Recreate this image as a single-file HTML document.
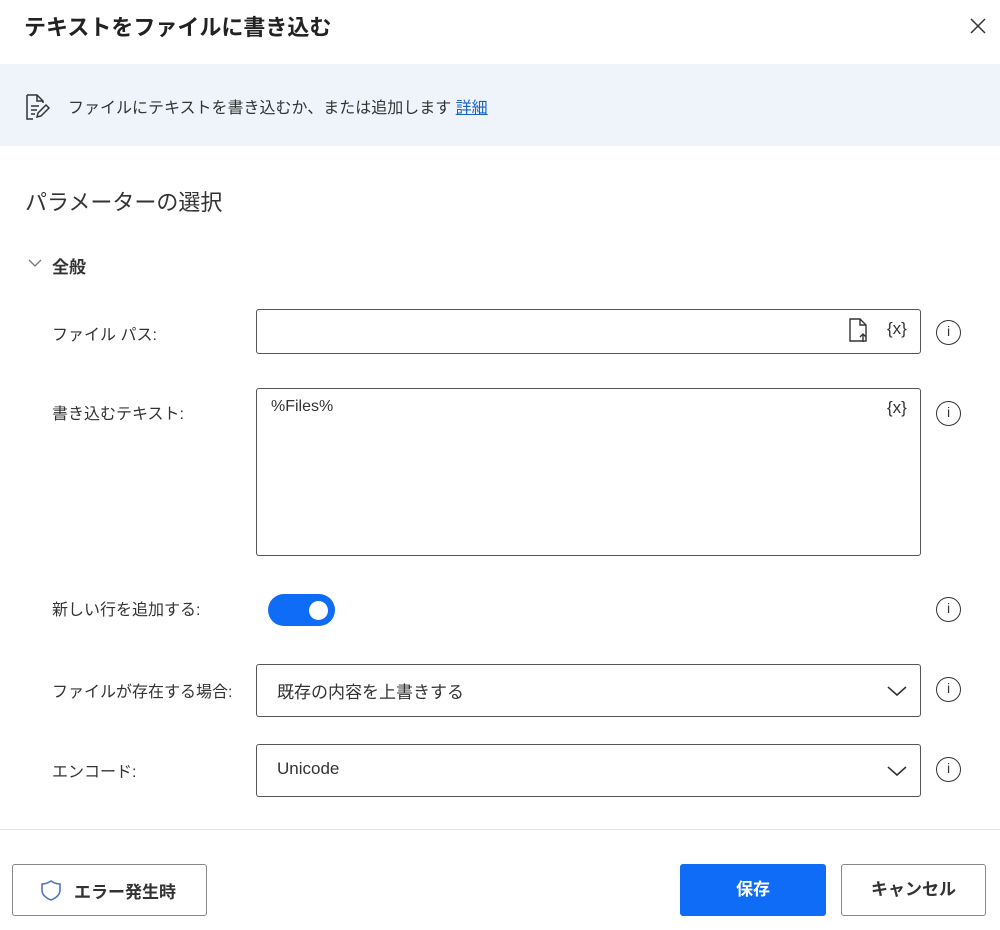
<!DOCTYPE html>
<html><head><meta charset="utf-8"><style>
*{box-sizing:border-box;margin:0;padding:0}
body{width:1000px;height:930px;background:#fff;font-family:"Liberation Sans","Noto Sans CJK JP",sans-serif;color:#242424;position:relative;overflow:hidden}
.a{position:absolute}
.lbl{position:absolute;left:52px;font-size:16px;color:#333}
.box{position:absolute;left:256px;width:665px;border:1.5px solid #555;border-radius:3px;background:#fff}
.info{position:absolute;left:936px;width:25px;height:25px;border:1.5px solid #333;border-radius:50%;font-size:14px;text-align:center;line-height:21px;font-family:"Liberation Sans",sans-serif;color:#333}
.vx{position:absolute;font-size:17px;color:#333}
</style></head><body>
<div class="a" style="left:24px;top:10px;font-size:22px;font-weight:bold;color:#222">テキストをファイルに書き込む</div>
<svg class="a" style="left:968px;top:16px" width="20" height="20"><path d="M3 3L17 17M17 3L3 17" stroke="#333" stroke-width="1.5"/></svg>
<div class="a" style="left:0;top:64px;width:1000px;height:82px;background:#eff4fb"></div>
<svg class="a" style="left:25px;top:93px" width="28" height="28" viewBox="0 0 28 28" fill="none" stroke="#333" stroke-width="1.5"><path d="M2 2H12L18 8V10M2 2V26H8"/><path d="M12 2V8H18"/><path d="M6 13H14M6 17H12M6 21H10"/><path d="M12 24L13 20L21 12L24 15L16 23Z"/></svg>
<div class="a" style="left:68px;top:94px;font-size:16px;color:#333">ファイルにテキストを書き込むか、または追加します <span style="color:#1a62c4;text-decoration:underline">詳細</span></div>
<div class="a" style="left:25px;top:185px;font-size:22px;color:#333">パラメーターの選択</div>
<svg class="a" style="left:28px;top:258px" width="14" height="10"><path d="M1 2L7 8L13 2" stroke="#777" stroke-width="1.3" fill="none"/></svg>
<div class="a" style="left:52px;top:253px;font-size:17px;font-weight:bold;color:#333">全般</div>

<div class="lbl" style="top:321px">ファイル パス:</div>
<div class="box" style="top:309px;height:45px"></div>
<svg class="a" style="left:848px;top:317px" width="26" height="28" fill="none" stroke="#333" stroke-width="1.4"><path d="M2 2H12L18 8V24H2Z"/><path d="M12 2V8H18"/><path d="M15 25V17M12 20L15 17L18 20"/></svg>
<div class="vx" style="left:887px;top:319px">{x}</div>
<div class="info" style="top:320px">i</div>

<div class="lbl" style="top:400px">書き込むテキスト:</div>
<div class="box" style="top:388px;height:168px"></div>
<div class="a" style="left:271px;top:398px;font-size:16px;color:#333">%Files%</div>
<div class="vx" style="left:887px;top:398px">{x}</div>
<div class="info" style="top:401px">i</div>

<div class="lbl" style="top:596px">新しい行を追加する:</div>
<div class="a" style="left:268px;top:594px;width:67px;height:32px;border-radius:16px;background:#0f6cf6"></div>
<div class="a" style="left:309px;top:601px;width:19px;height:19px;border-radius:50%;background:#fff"></div>
<div class="info" style="top:597px">i</div>

<div class="lbl" style="top:678px">ファイルが存在する場合:</div>
<div class="box" style="top:664px;height:53px"></div>
<div class="a" style="left:277px;top:678px;font-size:17px;color:#333">既存の内容を上書きする</div>
<svg class="a" style="left:886px;top:684px" width="22" height="14"><path d="M2 3L11 11L20 3" stroke="#333" stroke-width="1.6" fill="none"/></svg>
<div class="info" style="top:677px">i</div>

<div class="lbl" style="top:758px">エンコード:</div>
<div class="box" style="top:744px;height:53px"></div>
<div class="a" style="left:277px;top:759px;font-size:17px;color:#333">Unicode</div>
<svg class="a" style="left:886px;top:764px" width="22" height="14"><path d="M2 3L11 11L20 3" stroke="#333" stroke-width="1.6" fill="none"/></svg>
<div class="info" style="top:757px">i</div>

<div class="a" style="left:0;top:829px;width:1000px;height:1px;background:#e3e3e3"></div>
<div class="a" style="left:12px;top:864px;width:195px;height:52px;border:1px solid #888;border-radius:3px"></div>
<svg class="a" style="left:40px;top:879px" width="22" height="22" fill="none" stroke="#4a78c0" stroke-width="1.6"><path d="M11 2C8 4 5 5 2 5V11C2 16 6 19 11 21C16 19 20 16 20 11V5C17 5 14 4 11 2Z"/></svg>
<div class="a" style="left:74px;top:878px;font-size:17px;font-weight:bold;color:#333">エラー発生時</div>
<div class="a" style="left:680px;top:864px;width:146px;height:52px;background:#0f6cf6;border-radius:3px;color:#fff;font-size:17px;font-weight:bold;text-align:center;line-height:52px">保存</div>
<div class="a" style="left:841px;top:864px;width:145px;height:52px;border:1px solid #888;border-radius:3px;color:#333;font-size:17px;font-weight:bold;text-align:center;line-height:50px">キャンセル</div>
</body></html>
